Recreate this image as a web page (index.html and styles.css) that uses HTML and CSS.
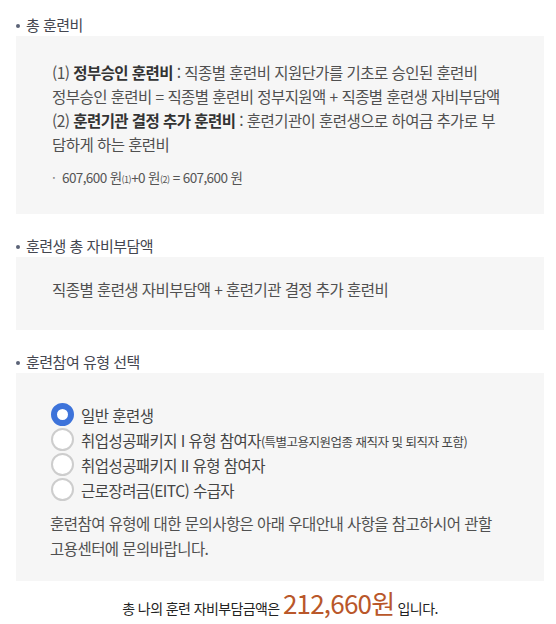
FILE: index.html
```html
<!DOCTYPE html>
<html lang="ko">
<head>
<meta charset="utf-8">
<title>훈련비 계산</title>
<link rel="stylesheet" href="styles.css">
</head>
<body>
<div class="page">
  <section class="sec">
    <h3 class="sec-title">총 훈련비</h3>
    <div class="box box-cost">
      <p class="desc">(1) <b>정부승인 훈련비</b> : 직종별 훈련비 지원단가를 기초로 승인된 훈련비<br>정부승인 훈련비 = 직종별 훈련비 정부지원액 + 직종별 훈련생 자비부담액<br>(2) <b>훈련기관 결정 추가 훈련비</b> : 훈련기관이 훈련생으로 하여금 추가로 부<br>담하게 하는 훈련비</p>
      <p class="calc"><span class="dot">·</span>607,600 원<span class="sub">(1)</span>+0 원<span class="sub">(2)</span> = 607,600 원</p>
    </div>
  </section>

  <section class="sec">
    <h3 class="sec-title">훈련생 총 자비부담액</h3>
    <div class="box box-self">
      <p class="desc">직종별 훈련생 자비부담액 + 훈련기관 결정 추가 훈련비</p>
    </div>
  </section>

  <section class="sec">
    <h3 class="sec-title">훈련참여 유형 선택</h3>
    <div class="box box-type">
      <ul class="radios">
        <li><label class="radio"><input type="radio" name="type" checked><span>일반 훈련생</span></label></li>
        <li><label class="radio"><input type="radio" name="type"><span>취업성공패키지 I 유형 참여자<small>(특별고용지원업종 재직자 및 퇴직자 포함)</small></span></label></li>
        <li><label class="radio"><input type="radio" name="type"><span>취업성공패키지 II 유형 참여자</span></label></li>
        <li><label class="radio"><input type="radio" name="type"><span>근로장려금(EITC) 수급자</span></label></li>
      </ul>
      <p class="note">훈련참여 유형에 대한 문의사항은 아래 우대안내 사항을 참고하시어 관할<br>고용센터에 문의바랍니다.</p>
    </div>
  </section>

  <p class="total">총 나의 훈련 자비부담금액은 <strong class="amount">212,660원</strong> 입니다.</p>
</div>
</body>
</html>
```

FILE: styles.css
```css
* {
  box-sizing: border-box;
}

body {
  margin: 0;
  background: #ffffff;
  font-family: "Noto Sans CJK KR", "Noto Sans", sans-serif;
  color: #555555;
  letter-spacing: -0.5px;
}

.page {
  padding: 14px 12px 0 16px;
}

.sec + .sec {
  margin-top: 21px;
}

.sec-title {
  margin: 0;
  padding-left: 10px;
  position: relative;
  font-size: 15px;
  font-weight: 400;
  line-height: 22px;
  color: #444650;
}

.sec-title::before {
  content: "";
  position: absolute;
  left: 0;
  top: 10px;
  width: 4px;
  height: 4px;
  border-radius: 50%;
  background: #5b6377;
}

.box {
  background: #f6f6f6;
}

.box-cost {
  padding: 24px 16px 24px 36px;
}

.box-self {
  padding: 20px 16px 29px 36px;
}

.box-type {
  padding: 29px 16px 20px 34px;
}

.desc {
  margin: 0;
  font-size: 15.5px;
  line-height: 24px;
  color: #505050;
  letter-spacing: -0.55px;
}

.desc b {
  font-weight: 700;
  color: #333333;
}

.calc {
  margin: 11px 0 0;
  font-size: 13.5px;
  line-height: 20px;
  color: #555555;
  letter-spacing: -0.6px;
}

.calc .dot {
  display: inline-block;
  width: 10px;
  color: #888888;
}

.calc .sub {
  font-size: 9px;
  letter-spacing: -0.5px;
}

.radios {
  list-style: none;
  margin: 0;
  padding: 0;
}

.radio {
  display: flex;
  align-items: center;
  gap: 7px;
  height: 25px;
  font-size: 15.5px;
  color: #444444;
  letter-spacing: -0.55px;
  cursor: pointer;
}

.radio input {
  appearance: none;
  -webkit-appearance: none;
  margin: 0 0 0 1px;
  width: 23px;
  height: 23px;
  border-radius: 50%;
  border: 2.5px solid #cdcdcd;
  background: #ffffff;
  flex: none;
}

.radio input:checked {
  border: 6.5px solid #3d73da;
}

.radio small {
  font-size: 12.5px;
  letter-spacing: -0.5px;
}

.note {
  margin: 9px 0 0;
  font-size: 15.5px;
  line-height: 25px;
  color: #505050;
  letter-spacing: -0.55px;
}

.total {
  margin: 5px 0 0;
  text-align: center;
  font-size: 14px;
  line-height: 34px;
  color: #222222;
  letter-spacing: -0.6px;
}

.amount {
  font-size: 26px;
  font-weight: 400;
  color: #b9572a;
  letter-spacing: -0.8px;
}
```
